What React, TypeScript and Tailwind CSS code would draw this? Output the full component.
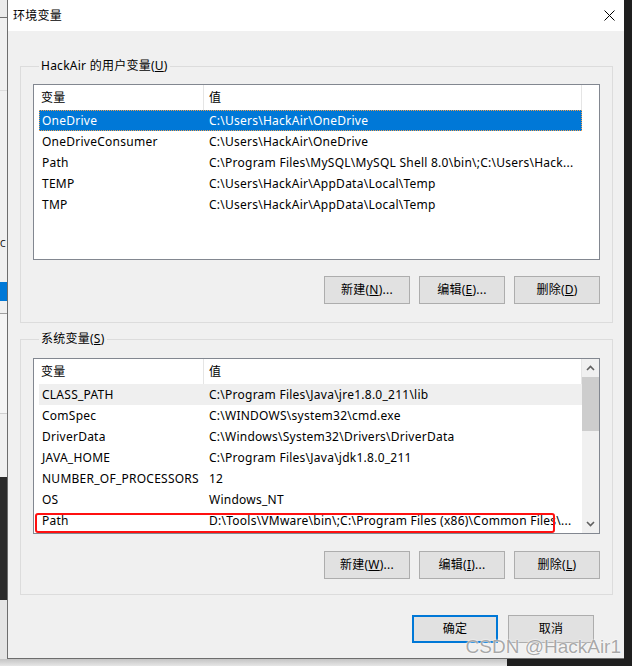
import type { ReactNode } from "react";

type Row = { name: string; value: string; selected?: boolean; hover?: boolean };

const userRows: Row[] = [
  { name: "OneDrive", value: "C:\\Users\\HackAir\\OneDrive", selected: true },
  { name: "OneDriveConsumer", value: "C:\\Users\\HackAir\\OneDrive" },
  { name: "Path", value: "C:\\Program Files\\MySQL\\MySQL Shell 8.0\\bin\\;C:\\Users\\Hack..." },
  { name: "TEMP", value: "C:\\Users\\HackAir\\AppData\\Local\\Temp" },
  { name: "TMP", value: "C:\\Users\\HackAir\\AppData\\Local\\Temp" },
];

const systemRows: Row[] = [
  { name: "CLASS_PATH", value: "C:\\Program Files\\Java\\jre1.8.0_211\\lib", hover: true },
  { name: "ComSpec", value: "C:\\WINDOWS\\system32\\cmd.exe" },
  { name: "DriverData", value: "C:\\Windows\\System32\\Drivers\\DriverData" },
  { name: "JAVA_HOME", value: "C:\\Program Files\\Java\\jdk1.8.0_211" },
  { name: "NUMBER_OF_PROCESSORS", value: "12" },
  { name: "OS", value: "Windows_NT" },
  { name: "Path", value: "D:\\Tools\\VMware\\bin\\;C:\\Program Files (x86)\\Common Files\\..." },
];

function Chevron({ up }: { up?: boolean }) {
  return (
    <svg width="9" height="6" viewBox="0 0 9 6">
      <path
        d={up ? "M1 5 L4.5 1.5 L8 5" : "M1 1 L4.5 4.5 L8 1"}
        fill="none"
        stroke="#606060"
        strokeWidth="1.6"
      />
    </svg>
  );
}

function ListView({ rows, scroll, children }: { rows: Row[]; scroll?: boolean; children?: ReactNode }) {
  return (
    <div className="relative flex h-[176px] w-[567px] overflow-hidden border border-[#828790] bg-white">
      <div className="flex-1 pl-[5px]">
        {/* header */}
        <div className="flex h-[25px] w-[543px] items-center border-r border-[#e5e5e5]">
          <div className="flex h-full w-[165px] items-center border-r border-[#e5e5e5] pl-[2px]">变量</div>
          <div className="pl-[5px]">值</div>
        </div>
        {rows.map((r) => (
          <div
            key={r.name}
            className={
              r.selected
                ? "flex h-[21px] w-[543px] items-center border border-dotted border-[#f0a050] bg-[#0078d7] text-white"
                : r.hover
                ? "flex h-[21px] w-[543px] items-center border border-transparent bg-[#efefef]"
                : "flex h-[21px] w-[543px] items-center border border-transparent"
            }
          >
            <div className="w-[167px] shrink-0 truncate pl-[2px]">{r.name}</div>
            <div className="min-w-0 flex-1 truncate pl-[2px] pr-[2px]">{r.value}</div>
          </div>
        ))}
      </div>
      {scroll && (
        <div className="flex w-[17px] flex-col bg-[#f0f0f0]">
          <div className="flex h-[18px] items-center justify-center">
            <Chevron up />
          </div>
          <div className="h-[54px] bg-[#cdcdcd]" />
          <div className="flex-1" />
          <div className="flex h-[18px] items-center justify-center">
            <Chevron />
          </div>
        </div>
      )}
      {children}
    </div>
  );
}

function Btn({ children, primary }: { children: ReactNode; primary?: boolean }) {
  return (
    <div
      className={
        primary
          ? "flex h-[28px] w-[86px] items-center justify-center border-2 border-[#0078d7] bg-[#e1e1e1]"
          : "flex h-[28px] w-[86px] items-center justify-center border border-[#adadad] bg-[#e1e1e1]"
      }
    >
      {children}
    </div>
  );
}

export default function App() {
  return (
    <div className="relative h-[666px] w-[632px] overflow-hidden bg-[#e4e4e4] font-['Microsoft_YaHei','Noto_Sans','Noto_Sans_CJK_SC',sans-serif] text-[12px] leading-[16px] tracking-[0.25px] text-black">
      <div className="flex h-[659px]">
        {/* window behind, left */}
        <div className="flex w-[7px] flex-col">
          <div className="h-[17px] bg-[#ebebeb]" />
          <div className="h-px bg-[#707070]" />
          <div className="h-[72px] bg-[#f0f0f0]" />
          <div className="h-px bg-[#dcdcdc]" />
          <div className="h-[142px] bg-[#f0f0f0]" />
          <div className="flex h-[22px] items-center bg-[#f0f0f0] text-[9px] tracking-normal">C</div>
          <div className="h-[27px] bg-[#f0f0f0]" />
          <div className="h-[19px] bg-[#0078d7]" />
          <div className="h-[12px] bg-[#f0f0f0]" />
          <div className="h-px bg-[#a0a0a0]" />
          <div className="h-[99px] bg-[#f5f5f5]" />
          <div className="h-px bg-[#d0d0d0]" />
          <div className="h-[63px] bg-[#f0f0f0]" />
          <div className="h-[123px] bg-[#2b2b2b]" />
          <div className="h-[59px] bg-[#e4e4e4]" />
        </div>

        {/* dialog */}
        <div className="flex w-[617px] flex-col border-b border-l border-[#6d6d6d] bg-[#f0f0f0]">
          <div className="flex h-[31px] items-center justify-between bg-white pl-[5px] pr-[9px]">
            <span>环境变量</span>
            <svg width="11" height="11" viewBox="0 0 11 11">
              <path d="M0.5 0.5 L10.5 10.5 M10.5 0.5 L0.5 10.5" stroke="#000" strokeWidth="1" />
            </svg>
          </div>

          <div className="flex flex-1 flex-col pl-[12px] pr-[11px] pt-[27px]">
            <fieldset className="border border-[#dcdcdc] px-[12px] pb-[18px] pt-[10px]">
              <legend className="ml-[6px] px-[2px]">
                HackAir 的用户变量(<u>U</u>)
              </legend>
              <ListView rows={userRows} />
              <div className="mt-[16px] flex justify-end gap-[9px]">
                <Btn>
                  新建(<u>N</u>)...
                </Btn>
                <Btn>
                  编辑(<u>E</u>)...
                </Btn>
                <Btn>
                  删除(<u>D</u>)
                </Btn>
              </div>
            </fieldset>

            <fieldset className="mt-[8px] border border-[#dcdcdc] px-[12px] pb-[15px] pt-[11px]">
              <legend className="ml-[6px] px-[2px]">
                系统变量(<u>S</u>)
              </legend>
              <ListView rows={systemRows} scroll>
                <div className="absolute left-px top-[154px] h-[20px] w-[520px] rounded-[3px] border-2 border-[#ff1010]" />
              </ListView>
              <div className="mt-[17px] flex justify-end gap-[9px]">
                <Btn>
                  新建(<u>W</u>)...
                </Btn>
                <Btn>
                  编辑(<u>I</u>)...
                </Btn>
                <Btn>
                  删除(<u>L</u>)
                </Btn>
              </div>
            </fieldset>

            <div className="mt-[20px] flex justify-end gap-[10px] pr-[19px]">
              <Btn primary>确定</Btn>
              <Btn>取消</Btn>
            </div>
          </div>
        </div>

        {/* dark area right */}
        <div className="w-[8px] bg-[#1f1f1f]" />
      </div>

      <div className="flex h-[7px]">
        <div className="w-[507px] bg-gradient-to-b from-[#c4c4c4] to-[#e6e6e6]" />
        <div className="flex-1 bg-[#1f1f1f]" />
      </div>

      <div className="absolute bottom-[10px] right-[11px] font-['Liberation_Sans',sans-serif] text-[19px] leading-[18px] tracking-normal text-[rgba(140,140,140,0.75)] [text-shadow:0_0_2px_#fff,0_0_1px_#fff]">
        CSDN @HackAir1
      </div>
    </div>
  );
}
